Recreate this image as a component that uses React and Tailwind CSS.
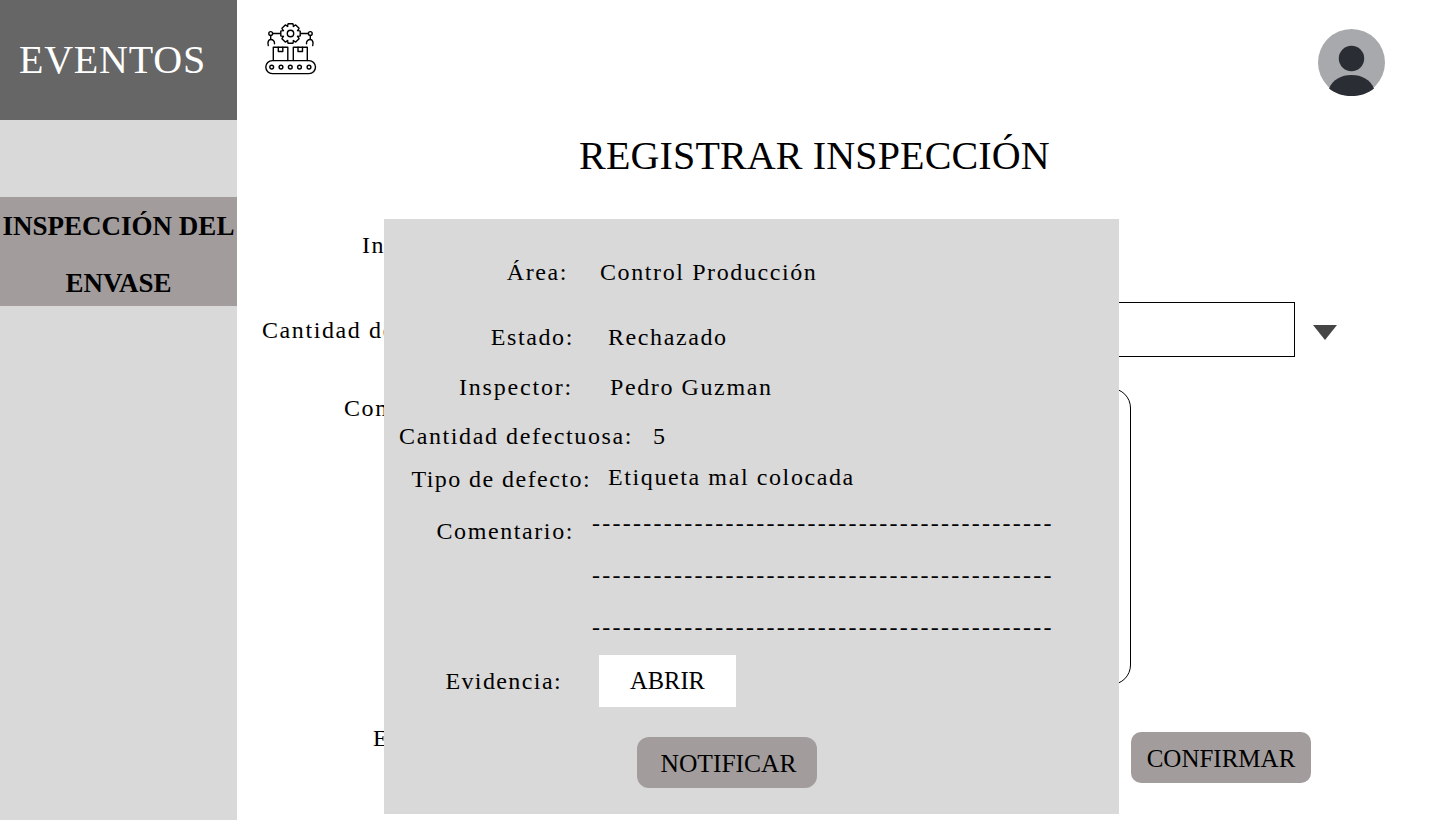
const serif = "font-['Liberation_Serif',serif]";

// 8 tooth gear outline around the middle of the icon
function gearPath(cx, cy, outer, inner) {
  const pts = [];
  for (let i = 0; i < 8; i++) {
    const a = (i * Math.PI) / 4;
    [[-0.42, inner], [-0.24, outer], [0.24, outer], [0.42, inner]].forEach(([d, r]) => {
      pts.push(`${(cx + r * Math.cos(a + d)).toFixed(2)} ${(cy + r * Math.sin(a + d)).toFixed(2)}`);
    });
  }
  return `M${pts.join("L")}Z`;
}

function FactoryIcon() {
  return (
    <svg width="52" height="53" viewBox="0 0 52 53" fill="none" stroke="#000" strokeWidth="1.4" strokeLinecap="round" strokeLinejoin="round">
      <path d={gearPath(25.500, 10.500, 10, 7.700)} />
      <circle cx="25.500" cy="10.500" r="3.200" />
      {/* arms */}
      <circle cx="5.700" cy="10.500" r="1.900" />
      <circle cx="45.300" cy="10.500" r="1.900" />
      <path d="M7.600 10.500h7.800M35.600 10.500h7.800M5.700 12.400v4.100M45.300 12.400v4.100" />
      <path d="M3.300 22.500c-1-3 .2-6 2.400-6 2.500 0 4 1.800 3.800 4.200M47.700 22.500c1-3-.2-6-2.400-6-2.500 0-4 1.800-3.800 4.200" />
      {/* boxes */}
      <path d="M8.300 37.500V24.300h14.500v13.200M28.300 37.500V24.300h14v13.200" />
      <path d="M13.300 24.300v4.200h4.500v-4.200M33 24.300v4.200h4.500v-4.200" />
      {/* belt */}
      <rect x="0.800" y="37.600" width="49.700" height="13" rx="6.500" />
      <circle cx="6.700" cy="44.100" r="1.900" />
      <circle cx="16" cy="44.100" r="1.900" />
      <circle cx="25.300" cy="44.100" r="1.900" />
      <circle cx="34.500" cy="44.100" r="1.900" />
      <circle cx="44" cy="44.100" r="1.900" />
    </svg>
  );
}

function Avatar() {
  return (
    <svg width="67" height="67" viewBox="0 0 67 67">
      <circle cx="33.500" cy="33.500" r="33.500" fill="#a7a9ac" />
      <circle cx="33.500" cy="29.500" r="12.700" fill="#2a2d33" />
      <path d="M11 59.500C15 50.500 23 46 33.500 46S52 50.500 56 59.500C50 64.500 42 67 33.500 67S17 64.500 11 59.500z" fill="#2a2d33" />
    </svg>
  );
}

function InfoRow({ label, value, labelWidth, labelClass, gap, className }) {
  return (
    <div className={`flex h-10 items-center text-[24px] tracking-[1.6px] ${className}`}>
      <span className={`text-right ${labelWidth} ${labelClass}`}>{label}</span>
      <span className={gap}>{value}</span>
    </div>
  );
}

const dashes = "---------------------------------------------";

export default function App() {
  return (
    <div className={`relative flex h-[820px] overflow-hidden bg-white text-black ${serif}`}>
      <aside className="w-[237px] shrink-0 bg-[#d9d9d9]">
        <div className="flex h-[120px] items-center justify-center bg-[#666666] pr-[12px] text-[40px] tracking-[0.8px] text-white">
          EVENTOS
        </div>
        <div className="mt-[77px] flex h-[109px] flex-col items-center justify-center bg-[#a29c9c] pt-[7px] text-center text-[27px] font-bold leading-[57px]">
          <span className="whitespace-nowrap">INSPECCIÓN DEL</span>
          <span>ENVASE</span>
        </div>
      </aside>

      <main className="min-w-0 flex-1">
        <header className="flex h-[120px] items-start justify-between pl-[28px] pr-[55px]">
          <div className="mt-[23px]"><FactoryIcon /></div>
          <div className="mt-[29px]"><Avatar /></div>
        </header>

        <h1 className="mt-[11px] h-[50px] pr-[48px] text-center text-[40px] leading-[50px] tracking-[0.150px]">
          REGISTRAR INSPECCIÓN
        </h1>

        <div className="mt-[49px] h-[40px] pl-[125px] text-[24px] leading-[30px] tracking-[1.6px]">Inspector:</div>

        <div className="mt-[32px] flex h-[55px] items-center text-[24px] tracking-[1.6px]">
          <span className="ml-[25px] w-[300px] shrink-0 whitespace-nowrap">Cantidad defectuosa:</span>
          <div className="ml-[400px] h-[55px] w-[333px] shrink-0 border border-black" />
          <div className="ml-[18px] mt-[6px] h-0 w-0 border-x-[12px] border-t-[15px] border-x-transparent border-t-[#454545]" />
        </div>

        <div className="mt-[31px] flex">
          <span className="ml-[107px] mt-[2px] w-[300px] shrink-0 text-[24px] leading-[36px] tracking-[1.6px]">Comentario:</span>
          <div className="ml-[187px] h-[297px] w-[300px] shrink-0 rounded-[20px] border border-black" />
        </div>

        <div className="mt-[47px] flex items-start">
          <span className="ml-[136px] mt-[-12px] w-[300px] shrink-0 text-[24px] tracking-[1.6px]">Evidencia:</span>
          <button className="ml-[458px] flex h-[51px] w-[180px] shrink-0 items-center justify-center rounded-[10px] bg-[#a29c9c] pt-[3px] text-[25px]">
            CONFIRMAR
          </button>
        </div>
      </main>

      {/* modal */}
      <div className="absolute left-[384px] top-[219px] flex h-[595px] w-[735px] flex-col bg-[#d9d9d9] pt-[33px]">
        <InfoRow label="Área:" value="Control Producción" labelWidth="w-[184px]" gap="ml-[32px]" />
        <InfoRow label="Estado:" value="Rechazado" labelWidth="w-[190px]" gap="ml-[34px]" className="mt-[25px]" />
        <InfoRow label="Inspector:" value="Pedro Guzman" labelWidth="w-[189px]" labelClass="tracking-[1.8px]" gap="ml-[37px]" className="mt-[10px]" />
        <InfoRow label="Cantidad defectuosa:" value="5" labelWidth="w-[249px]" gap="ml-[20px]" className="mt-[9px]" />
        <InfoRow label="Tipo de defecto:" value="Etiqueta mal colocada" labelWidth="w-[207px]" labelClass="tracking-[1.45px]" gap="ml-[17px] mt-[-4px]" className="mt-[3px]" />

        <div className="mt-[4px] flex text-[24px] tracking-[1.6px]">
          <span className="mt-[8px] w-[190px] text-right leading-[40px]">Comentario:</span>
          <div className="ml-[18px] flex flex-col gap-[12px] leading-[40px] tracking-[2.27px]">
            <span>{dashes}</span>
            <span>{dashes}</span>
            <span>{dashes}</span>
          </div>
        </div>

        <div className="mt-[8px] flex h-[52px] items-center text-[24px] tracking-[1.4px]">
          <span className="w-[178px] text-right">Evidencia:</span>
          <div className="ml-[37px] flex h-[52px] w-[137px] items-center justify-center bg-white text-[24.500px] tracking-normal">ABRIR</div>
        </div>

        <button className="ml-[253px] mt-[30px] flex h-[51px] w-[180px] items-center justify-center rounded-[12px] bg-[#a29c9c] pl-[3px] pt-[3px] text-[25.500px]">
          NOTIFICAR
        </button>
      </div>
    </div>
  );
}
